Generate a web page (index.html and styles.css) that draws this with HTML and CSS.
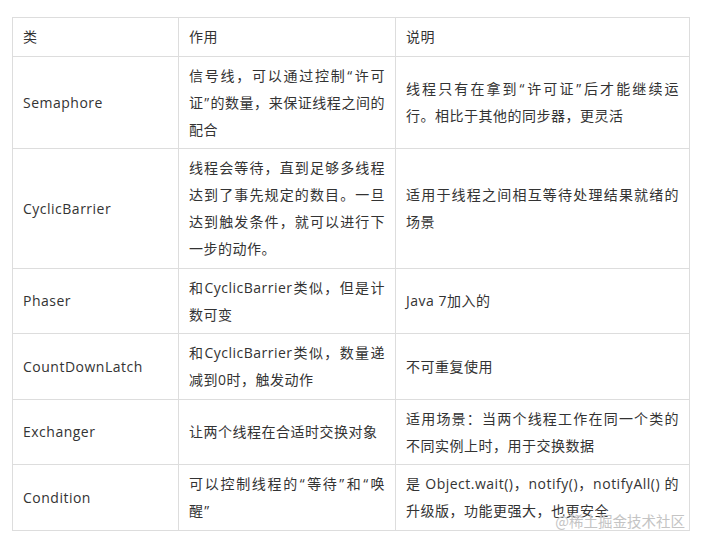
FILE: index.html
```html
<!DOCTYPE html>
<html lang="zh-CN">
<head>
<meta charset="utf-8">
<title>同步工具类</title>
<link rel="stylesheet" href="styles.css">
</head>
<body>
<div class="page">
  <table class="sync-table">
    <colgroup>
      <col class="c1">
      <col class="c2">
      <col class="c3">
    </colgroup>
    <tbody>
      <tr class="head">
        <td>类</td>
        <td>作用</td>
        <td>说明</td>
      </tr>
      <tr>
        <td>Semaphore</td>
        <td>信号线，可以通过控制<span class="q">“</span>许可证<span class="q">”</span>的数量，来保证线程之间的配合</td>
        <td>线程只有在拿到<span class="q">“</span>许可证<span class="q">”</span>后才能继续运行。相比于其他的同步器，更灵活</td>
      </tr>
      <tr>
        <td>CyclicBarrier</td>
        <td>线程会等待，直到足够多线程达到了事先规定的数目。一旦达到触发条件，就可以进行下一步的动作。</td>
        <td>适用于线程之间相互等待处理结果就绪的场景</td>
      </tr>
      <tr>
        <td>Phaser</td>
        <td>和CyclicBarrier类似，但是计数可变</td>
        <td>Java 7加入的</td>
      </tr>
      <tr>
        <td>CountDownLatch</td>
        <td>和CyclicBarrier类似，数量递减到0时，触发动作</td>
        <td>不可重复使用</td>
      </tr>
      <tr>
        <td>Exchanger</td>
        <td>让两个线程在合适时交换对象</td>
        <td>适用场景：当两个线程工作在同一个类的不同实例上时，用于交换数据</td>
      </tr>
      <tr>
        <td>Condition</td>
        <td>可以控制线程的<span class="q">“</span>等待<span class="q">”</span>和<span class="q">“</span>唤醒<span class="q">”</span></td>
        <td>是 Object.wait()，notify()，notifyAll() 的升级版，功能更强大，也更安全</td>
      </tr>
    </tbody>
  </table>
  <div class="watermark">@稀土掘金技术社区</div>
</div>
</body>
</html>
```
FILE: styles.css
```css
html, body {
  margin: 0;
  padding: 0;
  background: #ffffff;
}

body {
  font-family: "Open Sans", "Noto Sans CJK SC", sans-serif;
  font-size: 14px;
  color: #333333;
  letter-spacing: 0.5px;
}

.page {
  position: relative;
  padding: 17px 0 0 12px;
}

.sync-table {
  border-collapse: collapse;
  table-layout: fixed;
  width: 677px;
}

.c1 { width: 166px; }
.c2 { width: 217px; }
.c3 { width: 294px; }

.sync-table td {
  border: 1px solid #dddddd;
  padding: 5px 10px 5.5px 10px;
  line-height: 27px;
  vertical-align: middle;
  text-align: justify;
}

.q {
  margin: 0 0.75px;
}

.watermark {
  position: absolute;
  right: 18px;
  top: 510px;
  font-family: "Noto Sans CJK SC", sans-serif;
  font-size: 14.5px;
  letter-spacing: 0;
  color: #c4c4c4;
  text-shadow: 0 0 1px #ffffff;
}
```
